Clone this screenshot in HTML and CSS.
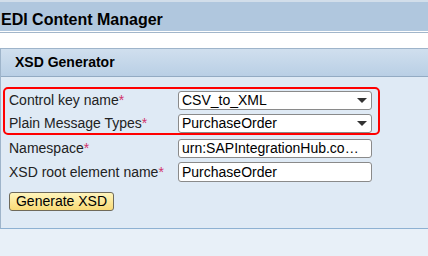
FILE: index.html
```html
<!DOCTYPE html>
<html>
<head>
<meta charset="utf-8">
<link rel="stylesheet" href="styles.css">
</head>
<body>
<div class="topbar">EDI Content Manager</div>
<div class="panel">
  <div class="panel-head">XSD Generator</div>
  <div class="panel-body">
    <div class="highlight">
      <div class="row">
        <span class="label">Control key name<span class="req">*</span></span>
        <div class="field select"><span class="val">CSV_to_XML</span><span class="arrow"></span></div>
      </div>
      <div class="row">
        <span class="label">Plain Message Types<span class="req">*</span></span>
        <div class="field select"><span class="val">PurchaseOrder</span><span class="arrow"></span></div>
      </div>
    </div>
    <div class="plain">
      <div class="row">
        <span class="label">Namespace<span class="req">*</span></span>
        <div class="field"><span class="val">urn:SAPIntegrationHub.co…</span></div>
      </div>
      <div class="row">
        <span class="label">XSD root element name<span class="req">*</span></span>
        <div class="field"><span class="val">PurchaseOrder</span></div>
      </div>
      <div class="actions">
        <button class="btn" type="button">Generate XSD</button>
      </div>
    </div>
  </div>
</div>
<div class="rest"></div>
</body>
</html>
```

FILE: styles.css
```css
html, body {
  margin: 0;
  padding: 0;
  background: #ffffff;
  font-family: "Liberation Sans", Arial, sans-serif;
  overflow: hidden;
  height: 256px;
}
.topbar {
  box-sizing: border-box;
  height: 31px;
  border-top: 2px solid #d2deea;
  background: #b0c7de;
  padding: 9px 0 3px 1px;
  font-size: 16px;
  line-height: 17px;
  font-weight: bold;
  color: #000;
  box-shadow: 0 1px 0 #ffffff, 0 2px 0 #a2b6ca;
}
.panel {
  margin-top: 17px;
  border-top: 1px solid #9eb4ca;
  border-left: 1px solid #9eb4ca;
  border-bottom: 1px solid #8eb1d2;
}
.panel-head {
  height: 27px;
  line-height: 27px;
  padding-left: 14px;
  font-size: 14px;
  font-weight: bold;
  color: #000;
  background: linear-gradient(#d0dfee, #b9cfe5);
  border-bottom: 1px solid #93abc3;
}
.panel-body {
  background: #dfeaf5;
  padding: 10px 0 16px 2px;
  height: 125px;
}
.highlight {
  width: 368px;
  border: 2px solid #f00;
  border-radius: 5px;
  padding: 2px 1px 0 4px;
  display: flex;
  flex-direction: column;
  gap: 4px;
}
.plain {
  padding: 4px 0 0 6px;
  display: flex;
  flex-direction: column;
  gap: 4px;
}
.row {
  display: grid;
  grid-template-columns: 169px 194px;
  height: 19px;
  align-items: center;
}
.label {
  font-size: 14px;
  line-height: 19px;
  color: #222;
  white-space: nowrap;
}
.req {
  color: #d2306a;
}
.field {
  box-sizing: border-box;
  height: 19px;
  background: #fff;
  border: 1px solid #8a8a8a;
  border-radius: 3px;
  padding: 0 4px 0 3px;
  font-size: 14px;
  line-height: 17px;
  color: #000;
  display: flex;
  align-items: center;
  overflow: hidden;
}
.val {
  flex: 1;
  min-width: 0;
  white-space: nowrap;
}
.select .arrow {
  width: 0;
  height: 0;
  border-left: 5px solid transparent;
  border-right: 5px solid transparent;
  border-top: 5px solid #333;
}
.row:nth-child(2) .field:not(.select) {
  height: 20px;
}
.actions {
  padding-top: 7px;
}
.btn {
  box-sizing: border-box;
  width: 105px;
  height: 19px;
  margin: 0;
  padding: 0;
  border: 1px solid #6f6a5a;
  border-radius: 3px;
  background: linear-gradient(#fff5bc, #f9da76);
  font-family: "Liberation Sans", Arial, sans-serif;
  font-size: 14px;
  line-height: 17px;
  color: #000;
}
.rest {
  background: #e8f0f8;
  height: 27px;
}
```
